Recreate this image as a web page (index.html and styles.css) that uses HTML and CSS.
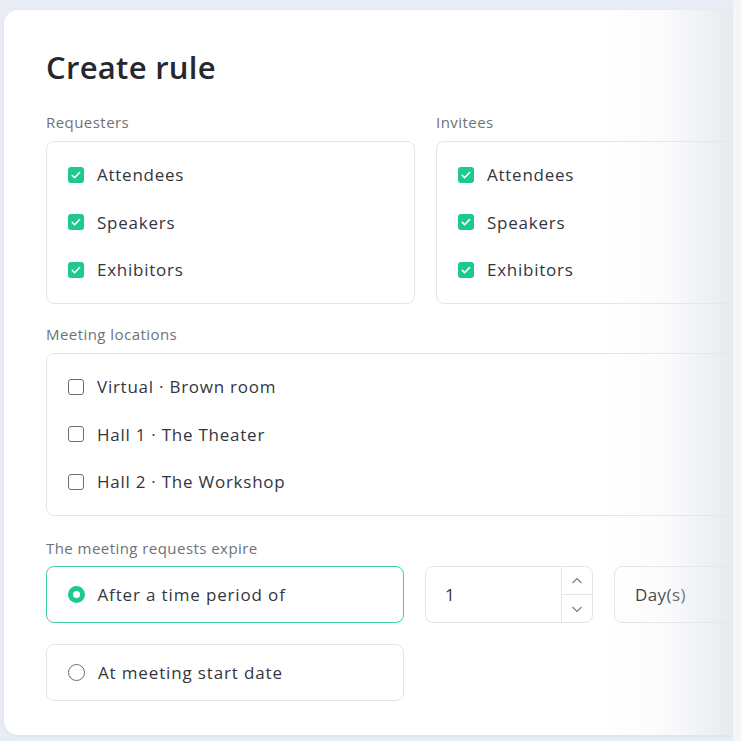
FILE: index.html
```html
<!DOCTYPE html>
<html>
<head>
<meta charset="utf-8">
<link rel="stylesheet" href="styles.css">
</head>
<body>
<div class="page">
  <div class="card">
    <h1 class="title">Create rule</h1>
    <div class="two-col">
      <div class="group">
        <div class="label">Requesters</div>
        <div class="box">
          <div class="row"><span class="check on"><svg viewBox="0 0 16 16"><path d="M4.2 8.3l2.4 2.4 5-5.2" /></svg></span>Attendees</div>
          <div class="row"><span class="check on"><svg viewBox="0 0 16 16"><path d="M4.2 8.3l2.4 2.4 5-5.2" /></svg></span>Speakers</div>
          <div class="row"><span class="check on"><svg viewBox="0 0 16 16"><path d="M4.2 8.3l2.4 2.4 5-5.2" /></svg></span>Exhibitors</div>
        </div>
      </div>
      <div class="group">
        <div class="label">Invitees</div>
        <div class="box">
          <div class="row"><span class="check on"><svg viewBox="0 0 16 16"><path d="M4.2 8.3l2.4 2.4 5-5.2" /></svg></span>Attendees</div>
          <div class="row"><span class="check on"><svg viewBox="0 0 16 16"><path d="M4.2 8.3l2.4 2.4 5-5.2" /></svg></span>Speakers</div>
          <div class="row"><span class="check on"><svg viewBox="0 0 16 16"><path d="M4.2 8.3l2.4 2.4 5-5.2" /></svg></span>Exhibitors</div>
        </div>
      </div>
    </div>
    <div class="group gap-top">
      <div class="label">Meeting locations</div>
      <div class="box wide">
        <div class="row"><span class="check"></span>Virtual · Brown room</div>
        <div class="row"><span class="check"></span>Hall 1 · The Theater</div>
        <div class="row"><span class="check"></span>Hall 2 · The Workshop</div>
      </div>
    </div>
    <div class="group gap-top2">
      <div class="label">The meeting requests expire</div>
      <div class="expire-row">
        <div class="radio-box selected"><span class="radio on"></span>After a time period of</div>
        <div class="number">
          <span class="num-value">1</span>
          <div class="spinner">
            <span class="spin"><svg viewBox="0 0 12 8"><path d="M1.5 6l4.5-4.5 4.5 4.5" /></svg></span>
            <span class="spin"><svg viewBox="0 0 12 8"><path d="M1.5 2l4.5 4.5 4.5-4.5" /></svg></span>
          </div>
        </div>
        <div class="select">Day(s)</div>
      </div>
      <div class="radio-box second"><span class="radio"></span>At meeting start date</div>
    </div>
    <div class="fade"></div>
  </div>
  <div class="edge"></div>
</div>
</body>
</html>
```

FILE: styles.css
```css
* { box-sizing: border-box; }
html, body { margin: 0; padding: 0; }
body {
  background: #e8ecf4;
  font-family: "Open Sans", "Liberation Sans", sans-serif;
  color: #33363d;
  width: 741px;
  height: 741px;
  overflow: hidden;
}
.page {
  position: relative;
  padding: 10px 0 0 4px;
  height: 741px;
}
.card {
  position: relative;
  width: 729px;
  height: 725px;
  background: #fff;
  border-radius: 14px 0 0 14px;
  overflow: hidden;
  padding: 39px 0 0 42px;
  box-shadow: 0 1px 3px rgba(30, 40, 70, 0.06);
}
.title {
  margin: 0;
  font-size: 31px;
  line-height: 36px;
  font-weight: 600;
  color: #25282e;
  letter-spacing: 0.3px;
}
.two-col {
  display: flex;
  gap: 21px;
  width: 759px;
  margin-top: 27px;
}
.two-col .group { width: 369px; flex: none; }
.label {
  font-size: 15px;
  line-height: 20px;
  color: #6e7279;
  height: 20px;
  margin-bottom: 9px;
  letter-spacing: 0.45px;
}
.box {
  border: 1px solid #e3e5e8;
  border-radius: 8px;
  padding: 9px 21px 11px;
  height: 163px;
}
.box.wide { width: 759px; }
.row {
  height: 47.5px;
  display: flex;
  align-items: center;
  font-size: 17px;
  letter-spacing: 0.75px;
  color: #33363d;
}
.check {
  width: 16px;
  height: 16px;
  border: 1.5px solid #6b6e74;
  border-radius: 3px;
  margin-right: 13px;
  flex: none;
  display: flex;
}
.check.on {
  background: #1ec98c;
  border: none;
}
.check svg {
  width: 16px;
  height: 16px;
  fill: none;
  stroke: #fff;
  stroke-width: 1.6;
  stroke-linecap: round;
  stroke-linejoin: round;
}
.gap-top { margin-top: 20px; }
.gap-top2 { margin-top: 22px; }
.gap-top2 .label { margin-bottom: 8px; }
.expire-row {
  display: flex;
  gap: 21px;
  width: 759px;
}
.radio-box {
  width: 358px;
  height: 57px;
  border: 1px solid #e3e5e8;
  border-radius: 8px;
  display: flex;
  align-items: center;
  padding-left: 21px;
  padding-bottom: 1px;
  font-size: 17px;
  letter-spacing: 0.85px;
  flex: none;
}
.radio-box.selected {
  border: 1.5px solid #3dd39c;
  padding-left: 20.5px;
}
.radio-box.second { margin-top: 21px; }
.radio {
  width: 17px;
  height: 17px;
  border: 1.5px solid #6b6e74;
  border-radius: 50%;
  margin-right: 13px;
  flex: none;
}
.radio.on {
  border: 5px solid #1ec98c;
}
.number {
  width: 168px;
  height: 57px;
  border: 1px solid #e3e5e8;
  border-radius: 8px;
  display: flex;
  flex: none;
}
.num-value {
  flex: 1;
  display: flex;
  align-items: center;
  padding-left: 19px;
  padding-bottom: 1px;
  font-size: 17px;
}
.spinner {
  width: 31px;
  border-left: 1px solid #e3e5e8;
  display: flex;
  flex-direction: column;
}
.spin {
  flex: 1;
  display: flex;
  align-items: center;
  justify-content: center;
}
.spin + .spin { border-top: 1px solid #e3e5e8; }
.spin svg {
  width: 12px;
  height: 8px;
  fill: none;
  stroke: #7b7f86;
  stroke-width: 1.2;
}
.select {
  width: 191px;
  height: 57px;
  border: 1px solid #e3e5e8;
  border-radius: 8px;
  display: flex;
  align-items: center;
  padding-left: 20px;
  padding-bottom: 1px;
  font-size: 17px;
  letter-spacing: 0.4px;
  flex: none;
  color: #2f3238;
}
.fade {
  position: absolute;
  top: 0;
  right: 0;
  width: 130px;
  height: 100%;
  background: linear-gradient(to right, rgba(228,231,237,0) 0%, rgba(228,231,237,0.15) 45%, rgba(228,231,237,0.9) 100%);
  pointer-events: none;
}
.edge {
  position: absolute;
  top: 0;
  right: 0;
  width: 8px;
  height: 741px;
  background: #f4f5f7;
}
```
